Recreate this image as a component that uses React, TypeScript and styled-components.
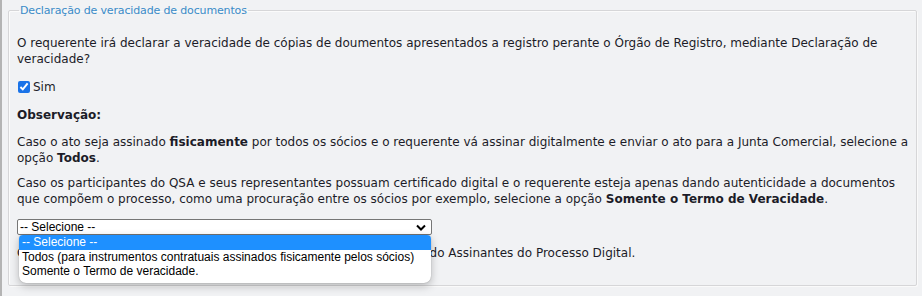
import React from 'react'
import styled, { createGlobalStyle } from 'styled-components'

const GlobalStyle = createGlobalStyle`
  html, body {
    margin: 0;
    padding: 0;
    background: #f1f2f4;
  }
  body {
    font-family: "DejaVu Sans", Verdana, sans-serif;
    font-size: 12px;
    color: #1c1c28;
  }
`

const Page = styled.div`
  width: 922px;
  height: 296px;
  box-sizing: border-box;
  border-left: 2px solid #b4b4b4;
  padding: 4px 5px 0 6px;
  overflow: hidden;
`

const Fieldset = styled.fieldset`
  margin: 0;
  border: 1px solid #d6d6d8;
  border-radius: 2px;
  padding: 0 8px 24px 8px;
  box-shadow: inset 1px 1px 0 #fbfbfb, 1px 1px 0 #fafafa;
`

const Legend = styled.legend`
  color: #3a8bc8;
  font-size: 11px;
  letter-spacing: -0.15px;
  padding: 0 1px;
  margin-left: 2px;
`

const Paragraph = styled.p<{ $gap?: number }>`
  margin: ${p => p.$gap ?? 9}px 0 0 0;
  line-height: 16px;
`

const CheckRow = styled.label`
  display: flex;
  align-items: center;
  gap: 3px;
  margin-top: 12px;
  line-height: 16px;
`

const Check = styled.input`
  margin: 0 0 0 1px;
  width: 12px;
  height: 12px;
  accent-color: #1a73e8;
`

const Heading = styled.p`
  margin: 12px 0 0 0;
  font-weight: bold;
  line-height: 16px;
`

const SelectArea = styled.div`
  position: relative;
  margin-top: 12px;
`

const Select = styled.div`
  box-sizing: border-box;
  width: 415px;
  height: 16px;
  border: 1px solid #767676;
  border-radius: 2px;
  background: #fff;
  font-family: "Liberation Sans", Arial, sans-serif;
  font-size: 12px;
  line-height: 14px;
  padding-left: 2px;
  display: flex;
  justify-content: space-between;
  align-items: center;
  color: #000;
`

const Chevron = styled.svg`
  width: 10px;
  height: 7px;
  margin-right: 5px;
`

const Note = styled.p`
  margin: 10px 0 0 0;
  line-height: 16px;
`

const OptionList = styled.ul`
  position: absolute;
  top: 16px;
  left: 2px;
  width: 412px;
  margin: 0;
  padding: 0 0 4px 0;
  list-style: none;
  background: #fff;
  border-radius: 4px 4px 7px 7px;
  box-shadow: 0 3px 8px rgba(0, 0, 0, 0.25), 0 0 1px rgba(0, 0, 0, 0.35);
  overflow: hidden;
  font-family: "Liberation Sans", Arial, sans-serif;
  font-size: 12px;
`

const Option = styled.li<{ $active?: boolean }>`
  height: 14.5px;
  line-height: 14.5px;
  padding-left: 3px;
  white-space: nowrap;
  background: ${p => (p.$active ? '#1e90ff' : 'transparent')};
  color: ${p => (p.$active ? '#fff' : '#000')};
`

const options = [
  '-- Selecione --',
  'Todos (para instrumentos contratuais assinados fisicamente pelos sócios)',
  'Somente o Termo de veracidade.',
]

export default function App() {
  return (
    <>
      <GlobalStyle />
      <Page>
        <Fieldset>
          <Legend>Declaração de veracidade de documentos</Legend>
          <Paragraph $gap={18}>
            O requerente irá declarar a veracidade de cópias de doumentos apresentados a registro perante o Órgão de
            Registro, mediante Declaração de veracidade?
          </Paragraph>
          <CheckRow>
            <Check type="checkbox" defaultChecked />
            Sim
          </CheckRow>
          <Heading>Observação:</Heading>
          <Paragraph $gap={11}>
            Caso o ato seja assinado <b>fisicamente</b> por todos os sócios e o requerente vá assinar digitalmente e
            enviar o ato para a Junta Comercial, selecione a opção <b>Todos</b>.
          </Paragraph>
          <Paragraph>
            Caso os participantes do QSA e seus representantes possuam certificado digital e o requerente esteja apenas
            dando autenticidade a documentos que compõem o processo, como uma procuração entre os sócios por exemplo,
            selecione a opção <b>Somente o Termo de Veracidade</b>.
          </Paragraph>
          <SelectArea>
            <Select>
              <span>-- Selecione --</span>
              <Chevron viewBox="0 0 10 7">
                <path d="M1 1.5 L5 5.5 L9 1.5" fill="none" stroke="#000" strokeWidth="2" />
              </Chevron>
            </Select>
            <Note>Os sócios que não assinarem fisicamente devem constar no Quadro do Assinantes do Processo Digital.</Note>
            <OptionList>
              {options.map((o, i) => (
                <Option key={o} $active={i === 0}>
                  {o}
                </Option>
              ))}
            </OptionList>
          </SelectArea>
        </Fieldset>
      </Page>
    </>
  )
}
